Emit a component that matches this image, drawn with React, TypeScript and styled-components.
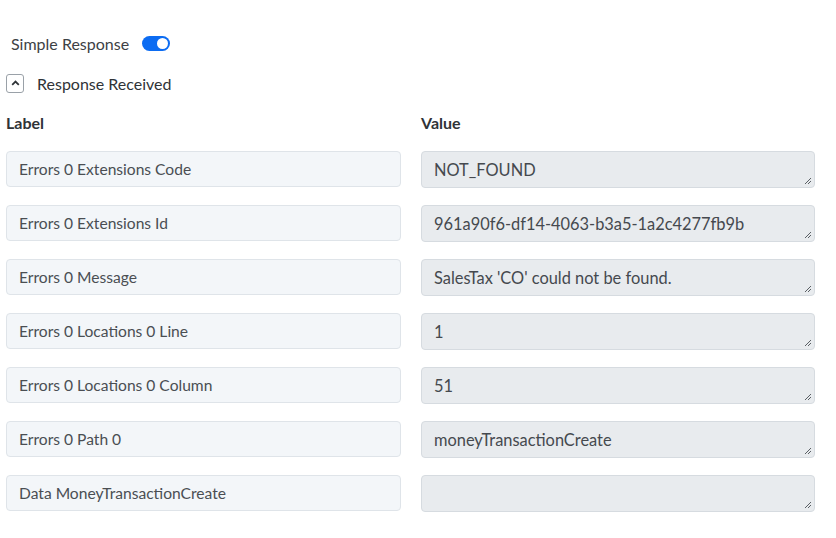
import React from "react";
import styled, { createGlobalStyle } from "styled-components";

const Global = createGlobalStyle`
  html, body { margin: 0; padding: 0; background: #fff; }
  body { font-family: Lato, "Open Sans", sans-serif; color: #3d4145; }
`;

const Page = styled.div`
  width: 836px;
  padding: 31px 21px 0 6px;
  box-sizing: border-box;
`;

const ToggleRow = styled.div`
  display: flex;
  align-items: center;
  gap: 13px;
  padding-left: 5px;
  height: 24px;
`;

const ToggleText = styled.span`
  font-size: 16px;
  color: #3d4145;
`;

const Switch = styled.span`
  position: relative;
  width: 28px;
  height: 15px;
  border-radius: 8px;
  background: #0c6cf2;
  display: inline-block;
`;

const Knob = styled.span`
  position: absolute;
  right: 2px;
  top: 2px;
  width: 11px;
  height: 11px;
  border-radius: 50%;
  background: #fff;
`;

const SectionRow = styled.div`
  display: flex;
  align-items: center;
  gap: 13px;
  margin-top: 18px;
  height: 20px;
`;

const ChevronBox = styled.span`
  width: 16px;
  height: 17px;
  border: 1px solid #9aa1a8;
  border-radius: 3px;
  display: flex;
  align-items: center;
  justify-content: center;
  box-sizing: content-box;
`;

const SectionText = styled.span`
  font-size: 16px;
  color: #2f3337;
`;

const Grid = styled.div`
  display: grid;
  grid-template-columns: 395px 394px;
  column-gap: 20px;
  row-gap: 17px;
  margin-top: 21px;
`;

const Head = styled.div`
  font-size: 16px;
  font-weight: 700;
  color: #2f3337;
  height: 17px;
  line-height: 17px;
  margin-bottom: 3px;
`;

const Field = styled.div`
  height: 36px;
  box-sizing: border-box;
  border: 1px solid #dfe4e9;
  border-radius: 4px;
  background: #f3f6f9;
  padding: 0 12px;
  display: flex;
  align-items: center;
  font-size: 15.6px;
  color: #4a4e53;
  white-space: nowrap;
`;

const ValueBox = styled.div`
  position: relative;
  height: 37px;
  box-sizing: border-box;
  border: 1px solid #d6dbe0;
  border-radius: 4px;
  background: #e8ebee;
  padding: 0 12px;
  display: flex;
  align-items: center;
  font-size: 16.4px;
  color: #45494e;
  white-space: nowrap;
`;

const Grip = styled.svg`
  position: absolute;
  right: 2px;
  bottom: 2px;
`;

const rows: [string, string][] = [
  ["Errors 0 Extensions Code", "NOT_FOUND"],
  ["Errors 0 Extensions Id", "961a90f6-df14-4063-b3a5-1a2c4277fb9b"],
  ["Errors 0 Message", "SalesTax 'CO' could not be found."],
  ["Errors 0 Locations 0 Line", "1"],
  ["Errors 0 Locations 0 Column", "51"],
  ["Errors 0 Path 0", "moneyTransactionCreate"],
  ["Data MoneyTransactionCreate", ""],
];

export default function App() {
  return (
    <Page>
      <Global />
      <ToggleRow>
        <ToggleText>Simple Response</ToggleText>
        <Switch>
          <Knob />
        </Switch>
      </ToggleRow>
      <SectionRow>
        <ChevronBox>
          <svg width="9" height="6" viewBox="0 0 9 6">
            <path d="M1.2 4.8 L4.5 1.6 L7.8 4.8" fill="none" stroke="#2f3337" strokeWidth="1.8" />
          </svg>
        </ChevronBox>
        <SectionText>Response Received</SectionText>
      </SectionRow>
      <Grid>
        <Head>Label</Head>
        <Head>Value</Head>
        {rows.map(([label, value]) => (
          <React.Fragment key={label}>
            <Field>{label}</Field>
            <ValueBox>
              {value}
              <Grip width="9" height="9" viewBox="0 0 9 9">
                <path d="M8 2 L2 8 M8 5 L5 8" stroke="#5a5f64" strokeWidth="1" />
              </Grip>
            </ValueBox>
          </React.Fragment>
        ))}
      </Grid>
    </Page>
  );
}
